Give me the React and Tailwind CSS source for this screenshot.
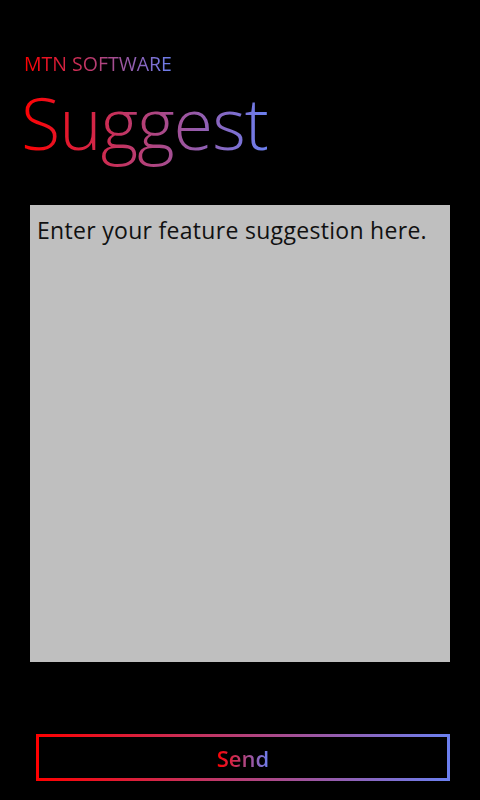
import React from 'react'

// sRGB interpolation, red → periwinkle
const grad = 'bg-[linear-gradient(to_right,#ff0000,#6b80f0)]'

export default function App() {
  return (
    <div className="w-[480px] h-[800px] bg-black flex flex-col" style={{ fontFamily: '"Open Sans", "Noto Sans", sans-serif' }}>
      {/* header */}
      <div className="flex pt-[54px] pl-6">
        <div className={`${grad} bg-clip-text text-transparent text-[19.5px] leading-[20px]`}>
          MTN SOFTWARE
        </div>
      </div>
      <div className="flex pl-[21px] mt-[3px]">
        <div className={`${grad} bg-clip-text text-transparent text-[72px] font-light leading-[90px] tracking-[-1px]`}>
          Suggest
        </div>
      </div>

      {/* text area */}
      <div className="mt-[38px] ml-[30px] w-[420px] h-[457px] bg-[#bfbfbf] px-[7px] pt-[10px]">
        <div className="text-[23px] leading-[30px] tracking-[0.3px] text-[#111]">Enter your feature suggestion here.</div>
      </div>

      {/* send button */}
      <div className={`mt-auto mb-[19px] ml-[36px] w-[414px] h-[47px] p-[3px] ${grad}`}>
        <div className="w-full h-full bg-black flex items-center justify-center">
          <span className={`${grad} bg-clip-text text-transparent text-[22px] font-semibold leading-[28px]`}>Send</span>
        </div>
      </div>
    </div>
  )
}
